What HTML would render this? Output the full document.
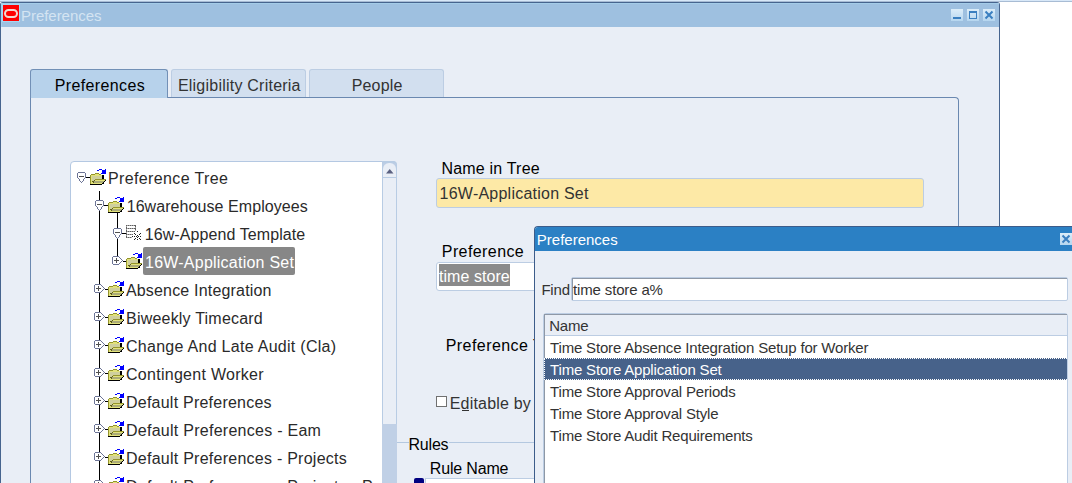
<!DOCTYPE html>
<html><head><meta charset="utf-8">
<style>
*{margin:0;padding:0;box-sizing:border-box}
html,body{width:1072px;height:483px;overflow:hidden;background:#fff;font-family:"Liberation Sans",sans-serif}
.a{position:absolute}
.t{position:absolute;white-space:pre;line-height:20px;font-size:16px;color:#000}
.wb{position:absolute;top:9px;width:12px;height:12px;background:linear-gradient(#dcedf9,#b6d6ef)}
.tr{position:absolute;white-space:pre;line-height:20px;font-size:16px;color:#222;letter-spacing:0.32px}
.pl{position:absolute;white-space:pre;line-height:20px;font-size:15px;color:#333;letter-spacing:-0.15px}
</style></head><body>
<div class="a" style="left:0;top:0;width:1072px;height:1px;background:#d8e8f8"></div>
<div class="a" style="left:0;top:1px;width:1072px;height:1px;background:#a8bcd4"></div>
<div class="a" style="left:0;top:2px;width:1000px;height:481px;background:#e9eef6;border-left:1px solid #46648e;border-right:1px solid #46648e;border-top:1px solid #46648e;border-top-left-radius:3px;border-top-right-radius:3px"></div>
<div class="a" style="left:1px;top:3px;width:998px;height:24px;background:#9ec0e0;border-top:1px solid #a4cce8"></div>
<div class="a" style="left:1px;top:3px;width:1px;height:24px;background:#a4d0ec"></div>
<div class="a" style="left:2px;top:4px;width:18px;height:18px;background:#a6d6f2"></div>
<div class="a" style="left:3px;top:5px;width:16px;height:16px;background:#ff0000"></div>
<div class="a" style="left:4px;top:8.5px;width:14px;height:9px;border:2px solid #f2d8d2;border-radius:4.5px"></div>
<div class="t" style="left:21px;top:5.80px;font-size:15px;color:#d4e4f2;letter-spacing:-0.04px;">Preferences</div>
<div class="wb" style="left:951px"><div class="a" style="left:2px;top:8px;width:8px;height:2px;background:#3a7fc0"></div></div>
<div class="wb" style="left:967px"><div class="a" style="left:2px;top:2px;width:8px;height:8px;border:1px solid #3a7fc0;border-top-width:2px"></div></div>
<div class="wb" style="left:983px"><svg class="a" style="left:0;top:0" width="12" height="12"><path d="M2.5 2.5L9.5 9.5M9.5 2.5L2.5 9.5" stroke="#3a7fc0" stroke-width="2"/></svg></div>
<div class="a" style="left:30px;top:97px;width:929px;height:386px;border-left:1px solid #6a88b0;border-top:1px solid #6a88b0;border-right:1px solid #6a88b0;border-top-right-radius:4px"></div>
<div class="a" style="left:30px;top:69px;width:138px;height:29px;background:#b7d2eb;border:1px solid #7290b6;border-bottom:none;border-radius:3px 3px 0 0"></div>
<div class="a" style="left:31px;top:97px;width:136px;height:1px;background:#b7d2eb"></div>
<div class="a" style="left:171px;top:69px;width:135px;height:28px;background:#d2dfef;border:1px solid #bccde3;border-bottom:none;border-radius:3px 3px 0 0"></div>
<div class="a" style="left:309px;top:69px;width:135px;height:28px;background:#d2dfef;border:1px solid #bccde3;border-bottom:none;border-radius:3px 3px 0 0"></div>
<div class="t" style="left:54.8px;top:76.46px;font-size:16px;color:#000;letter-spacing:0.36px;">Preferences</div>
<div class="t" style="left:177.9px;top:76.46px;font-size:16px;color:#333;letter-spacing:0.23px;">Eligibility Criteria</div>
<div class="t" style="left:351.7px;top:76.46px;font-size:16px;color:#333;letter-spacing:0.18px;">People</div>
<div class="a" style="left:70px;top:161px;width:327px;height:330px;background:#fff;border:1px solid #b4c8e2;border-radius:4px 4px 0 0"></div>
<div class="a" style="left:99px;top:191px;width:1px;height:300px;background:#000"></div>
<div class="a" style="left:117px;top:211px;width:1px;height:45px;background:#000"></div>
<div class="a" style="left:143px;top:247px;width:152px;height:28px;background:#878787;border-radius:2px"></div>
<svg class="a" style="left:77px;top:172px" width="9" height="11" shape-rendering="crispEdges"><path d="M1 0h7v1h-7zM0 1h1v1h-1zM8 1h1v1h-1zM0 2h1v1h-1zM8 2h1v1h-1zM0 3h1v1h-1zM8 3h1v1h-1zM0 4h1v1h-1zM8 4h1v1h-1zM0 5h1v1h-1zM8 5h1v1h-1zM1 6h1v1h-1zM7 6h1v1h-1zM2 7h1v1h-1zM6 7h1v1h-1zM2 8h1v1h-1zM6 8h1v1h-1zM3 9h1v1h-1zM5 9h1v1h-1zM4 10h1v1h-1z" fill="#6c7496"/><path d="M1 1h7v1h-7zM1 2h7v1h-7zM1 3h7v1h-7zM1 4h1v1h-1zM7 4h1v1h-1zM1 5h7v1h-7zM2 6h5v1h-5zM3 7h3v1h-3zM3 8h3v1h-3zM4 9h1v1h-1z" fill="#ffffff"/><path d="M2 4h5v1h-5z" fill="#505050"/></svg>
<div class="a" style="left:86px;top:177px;width:4px;height:1px;background:#000"></div>
<svg class="a" style="left:90px;top:169px" width="17" height="16" shape-rendering="crispEdges"><path d="M9 0h3v1h-3zM15 0h1v1h-1zM7 1h2v1h-2zM12 1h4v1h-4zM12 2h4v1h-4zM12 3h4v1h-4zM11 4h5v1h-5z" fill="#0000ff"/><path d="M5 4h4v1h-4zM1 5h4v1h-4zM9 5h2v1h-2zM0 6h1v1h-1zM0 7h1v1h-1zM0 8h1v1h-1zM0 9h1v1h-1zM0 10h1v1h-1zM5 10h11v1h-11zM0 11h1v1h-1zM0 12h1v1h-1zM0 13h1v1h-1zM0 14h1v1h-1z" fill="#94942c"/><path d="M5 5h4v1h-4zM1 6h11v1h-11zM1 7h1v1h-1zM1 8h1v1h-1zM1 9h1v1h-1zM1 10h1v1h-1zM1 11h1v1h-1zM5 11h10v1h-10zM1 12h1v1h-1zM1 13h2v1h-2zM1 14h11v1h-11z" fill="#e2e27a"/><path d="M12 6h2v1h-2zM12 7h2v1h-2zM12 8h2v1h-2zM12 9h2v1h-2zM15 11h1v1h-1zM14 12h1v1h-1zM13 13h1v1h-1zM12 14h2v1h-2zM0 15h12v1h-12z" fill="#000"/><path d="M2 7h10v1h-10zM2 8h10v1h-10zM2 9h10v1h-10zM2 10h3v1h-3zM2 11h2v1h-2z" fill="#cfcf9e"/><path d="M4 11h1v1h-1zM2 12h2v1h-2zM3 13h1v1h-1z" fill="#5c5c18"/><path d="M4 12h10v1h-10zM4 13h9v1h-9z" fill="#abab78"/></svg>
<div class="t" style="left:107.9px;top:169.46px;font-size:16px;color:#2a2a2a;letter-spacing:0.386px;">Preference Tree</div>
<svg class="a" style="left:95px;top:200px" width="9" height="11" shape-rendering="crispEdges"><path d="M1 0h7v1h-7zM0 1h1v1h-1zM8 1h1v1h-1zM0 2h1v1h-1zM8 2h1v1h-1zM0 3h1v1h-1zM8 3h1v1h-1zM0 4h1v1h-1zM8 4h1v1h-1zM0 5h1v1h-1zM8 5h1v1h-1zM1 6h1v1h-1zM7 6h1v1h-1zM2 7h1v1h-1zM6 7h1v1h-1zM2 8h1v1h-1zM6 8h1v1h-1zM3 9h1v1h-1zM5 9h1v1h-1zM4 10h1v1h-1z" fill="#6c7496"/><path d="M1 1h7v1h-7zM1 2h7v1h-7zM1 3h7v1h-7zM1 4h1v1h-1zM7 4h1v1h-1zM1 5h7v1h-7zM2 6h5v1h-5zM3 7h3v1h-3zM3 8h3v1h-3zM4 9h1v1h-1z" fill="#ffffff"/><path d="M2 4h5v1h-5z" fill="#505050"/></svg>
<div class="a" style="left:104px;top:205px;width:4px;height:1px;background:#000"></div>
<svg class="a" style="left:108px;top:197px" width="17" height="16" shape-rendering="crispEdges"><path d="M9 0h3v1h-3zM15 0h1v1h-1zM7 1h2v1h-2zM12 1h4v1h-4zM12 2h4v1h-4zM12 3h4v1h-4zM11 4h5v1h-5z" fill="#0000ff"/><path d="M5 4h4v1h-4zM1 5h4v1h-4zM9 5h2v1h-2zM0 6h1v1h-1zM0 7h1v1h-1zM0 8h1v1h-1zM0 9h1v1h-1zM0 10h1v1h-1zM5 10h11v1h-11zM0 11h1v1h-1zM0 12h1v1h-1zM0 13h1v1h-1zM0 14h1v1h-1z" fill="#94942c"/><path d="M5 5h4v1h-4zM1 6h11v1h-11zM1 7h1v1h-1zM1 8h1v1h-1zM1 9h1v1h-1zM1 10h1v1h-1zM1 11h1v1h-1zM5 11h10v1h-10zM1 12h1v1h-1zM1 13h2v1h-2zM1 14h11v1h-11z" fill="#e2e27a"/><path d="M12 6h2v1h-2zM12 7h2v1h-2zM12 8h2v1h-2zM12 9h2v1h-2zM15 11h1v1h-1zM14 12h1v1h-1zM13 13h1v1h-1zM12 14h2v1h-2zM0 15h12v1h-12z" fill="#000"/><path d="M2 7h10v1h-10zM2 8h10v1h-10zM2 9h10v1h-10zM2 10h3v1h-3zM2 11h2v1h-2z" fill="#cfcf9e"/><path d="M4 11h1v1h-1zM2 12h2v1h-2zM3 13h1v1h-1z" fill="#5c5c18"/><path d="M4 12h10v1h-10zM4 13h9v1h-9z" fill="#abab78"/></svg>
<div class="t" style="left:126.7px;top:197.46px;font-size:16px;color:#2a2a2a;letter-spacing:0.07px;">16warehouse Employees</div>
<svg class="a" style="left:113px;top:228px" width="9" height="11" shape-rendering="crispEdges"><path d="M1 0h7v1h-7zM0 1h1v1h-1zM8 1h1v1h-1zM0 2h1v1h-1zM8 2h1v1h-1zM0 3h1v1h-1zM8 3h1v1h-1zM0 4h1v1h-1zM8 4h1v1h-1zM0 5h1v1h-1zM8 5h1v1h-1zM1 6h1v1h-1zM7 6h1v1h-1zM2 7h1v1h-1zM6 7h1v1h-1zM2 8h1v1h-1zM6 8h1v1h-1zM3 9h1v1h-1zM5 9h1v1h-1zM4 10h1v1h-1z" fill="#6c7496"/><path d="M1 1h7v1h-7zM1 2h7v1h-7zM1 3h7v1h-7zM1 4h1v1h-1zM7 4h1v1h-1zM1 5h7v1h-7zM2 6h5v1h-5zM3 7h3v1h-3zM3 8h3v1h-3zM4 9h1v1h-1z" fill="#ffffff"/><path d="M2 4h5v1h-5z" fill="#505050"/></svg>
<div class="a" style="left:122px;top:233px;width:4px;height:1px;background:#000"></div>
<svg class="a" style="left:126px;top:225px" width="17" height="15" shape-rendering="crispEdges"><path d="M0 0h1v1h-1zM2 0h1v1h-1zM4 0h1v1h-1zM6 0h1v1h-1zM8 0h2v1h-2zM9 1h1v1h-1zM0 2h1v1h-1zM0 3h1v1h-1zM2 3h1v1h-1zM4 3h1v1h-1zM6 3h1v1h-1zM8 3h2v1h-2zM9 4h1v1h-1zM0 5h1v1h-1zM0 6h1v1h-1zM2 6h1v1h-1zM4 6h1v1h-1zM6 6h1v1h-1zM8 6h1v1h-1zM0 8h1v1h-1zM0 9h1v1h-1zM2 9h1v1h-1zM4 9h1v1h-1zM6 9h1v1h-1zM0 11h1v1h-1zM0 12h1v1h-1zM2 12h1v1h-1zM4 12h1v1h-1z" fill="#606060"/><path d="M1 0h1v1h-1zM3 0h1v1h-1zM5 0h1v1h-1zM7 0h1v1h-1zM0 1h1v1h-1zM9 2h1v1h-1zM1 3h1v1h-1zM3 3h1v1h-1zM5 3h1v1h-1zM7 3h1v1h-1zM0 4h1v1h-1zM9 5h1v1h-1zM1 6h1v1h-1zM3 6h1v1h-1zM5 6h1v1h-1zM7 6h1v1h-1zM0 7h1v1h-1zM1 9h1v1h-1zM3 9h1v1h-1zM5 9h1v1h-1zM0 10h1v1h-1zM1 12h1v1h-1zM3 12h1v1h-1zM5 12h1v1h-1z" fill="#a8a8a8"/><path d="M11 6h1v1h-1zM8 8h1v1h-1zM14 8h1v1h-1zM9 9h1v1h-1zM13 9h1v1h-1zM11 10h1v1h-1zM6 11h1v1h-1zM8 11h1v1h-1zM10 11h1v1h-1zM12 11h1v1h-1zM14 11h1v1h-1zM11 12h1v1h-1zM9 13h1v1h-1zM13 13h1v1h-1zM8 14h1v1h-1zM11 14h1v1h-1zM14 14h1v1h-1z" fill="#202020"/></svg>
<div class="t" style="left:144.7px;top:225.46px;font-size:16px;color:#2a2a2a;letter-spacing:0.089px;">16w-Append Template</div>
<svg class="a" style="left:112px;top:256px" width="11" height="9" shape-rendering="crispEdges"><path d="M1 0h6v1h-6zM0 1h1v1h-1zM7 1h1v1h-1zM0 2h1v1h-1zM8 2h1v1h-1zM0 3h1v1h-1zM9 3h1v1h-1zM0 4h1v1h-1zM10 4h1v1h-1zM0 5h1v1h-1zM9 5h1v1h-1zM0 6h1v1h-1zM8 6h1v1h-1zM0 7h1v1h-1zM7 7h1v1h-1zM1 8h6v1h-6z" fill="#6c7496"/><path d="M1 1h6v1h-6zM1 2h3v1h-3zM5 2h3v1h-3zM1 3h3v1h-3zM5 3h4v1h-4zM1 4h1v1h-1zM7 4h3v1h-3zM1 5h3v1h-3zM5 5h4v1h-4zM1 6h3v1h-3zM5 6h3v1h-3zM1 7h6v1h-6z" fill="#ffffff"/><path d="M4 2h1v1h-1zM4 3h1v1h-1zM2 4h5v1h-5zM4 5h1v1h-1zM4 6h1v1h-1z" fill="#505050"/></svg>
<div class="a" style="left:123px;top:261px;width:3px;height:1px;background:#000"></div>
<svg class="a" style="left:126px;top:253px" width="17" height="16" shape-rendering="crispEdges"><path d="M9 0h3v1h-3zM15 0h1v1h-1zM7 1h2v1h-2zM12 1h4v1h-4zM12 2h4v1h-4zM12 3h4v1h-4zM11 4h5v1h-5z" fill="#0000ff"/><path d="M5 4h4v1h-4zM1 5h4v1h-4zM9 5h2v1h-2zM0 6h1v1h-1zM0 7h1v1h-1zM0 8h1v1h-1zM0 9h1v1h-1zM0 10h1v1h-1zM5 10h11v1h-11zM0 11h1v1h-1zM0 12h1v1h-1zM0 13h1v1h-1zM0 14h1v1h-1z" fill="#94942c"/><path d="M5 5h4v1h-4zM1 6h11v1h-11zM1 7h1v1h-1zM1 8h1v1h-1zM1 9h1v1h-1zM1 10h1v1h-1zM1 11h1v1h-1zM5 11h10v1h-10zM1 12h1v1h-1zM1 13h2v1h-2zM1 14h11v1h-11z" fill="#e2e27a"/><path d="M12 6h2v1h-2zM12 7h2v1h-2zM12 8h2v1h-2zM12 9h2v1h-2zM15 11h1v1h-1zM14 12h1v1h-1zM13 13h1v1h-1zM12 14h2v1h-2zM0 15h12v1h-12z" fill="#000"/><path d="M2 7h10v1h-10zM2 8h10v1h-10zM2 9h10v1h-10zM2 10h3v1h-3zM2 11h2v1h-2z" fill="#cfcf9e"/><path d="M4 11h1v1h-1zM2 12h2v1h-2zM3 13h1v1h-1z" fill="#5c5c18"/><path d="M4 12h10v1h-10zM4 13h9v1h-9z" fill="#abab78"/></svg>
<div class="t" style="left:145.0px;top:253.46px;font-size:16px;color:#fff;letter-spacing:0.233px;">16W-Application Set</div>
<svg class="a" style="left:94px;top:284px" width="11" height="9" shape-rendering="crispEdges"><path d="M1 0h6v1h-6zM0 1h1v1h-1zM7 1h1v1h-1zM0 2h1v1h-1zM8 2h1v1h-1zM0 3h1v1h-1zM9 3h1v1h-1zM0 4h1v1h-1zM10 4h1v1h-1zM0 5h1v1h-1zM9 5h1v1h-1zM0 6h1v1h-1zM8 6h1v1h-1zM0 7h1v1h-1zM7 7h1v1h-1zM1 8h6v1h-6z" fill="#6c7496"/><path d="M1 1h6v1h-6zM1 2h3v1h-3zM5 2h3v1h-3zM1 3h3v1h-3zM5 3h4v1h-4zM1 4h1v1h-1zM7 4h3v1h-3zM1 5h3v1h-3zM5 5h4v1h-4zM1 6h3v1h-3zM5 6h3v1h-3zM1 7h6v1h-6z" fill="#ffffff"/><path d="M4 2h1v1h-1zM4 3h1v1h-1zM2 4h5v1h-5zM4 5h1v1h-1zM4 6h1v1h-1z" fill="#505050"/></svg>
<div class="a" style="left:105px;top:289px;width:3px;height:1px;background:#000"></div>
<svg class="a" style="left:108px;top:281px" width="17" height="16" shape-rendering="crispEdges"><path d="M9 0h3v1h-3zM15 0h1v1h-1zM7 1h2v1h-2zM12 1h4v1h-4zM12 2h4v1h-4zM12 3h4v1h-4zM11 4h5v1h-5z" fill="#0000ff"/><path d="M5 4h4v1h-4zM1 5h4v1h-4zM9 5h2v1h-2zM0 6h1v1h-1zM0 7h1v1h-1zM0 8h1v1h-1zM0 9h1v1h-1zM0 10h1v1h-1zM5 10h11v1h-11zM0 11h1v1h-1zM0 12h1v1h-1zM0 13h1v1h-1zM0 14h1v1h-1z" fill="#94942c"/><path d="M5 5h4v1h-4zM1 6h11v1h-11zM1 7h1v1h-1zM1 8h1v1h-1zM1 9h1v1h-1zM1 10h1v1h-1zM1 11h1v1h-1zM5 11h10v1h-10zM1 12h1v1h-1zM1 13h2v1h-2zM1 14h11v1h-11z" fill="#e2e27a"/><path d="M12 6h2v1h-2zM12 7h2v1h-2zM12 8h2v1h-2zM12 9h2v1h-2zM15 11h1v1h-1zM14 12h1v1h-1zM13 13h1v1h-1zM12 14h2v1h-2zM0 15h12v1h-12z" fill="#000"/><path d="M2 7h10v1h-10zM2 8h10v1h-10zM2 9h10v1h-10zM2 10h3v1h-3zM2 11h2v1h-2z" fill="#cfcf9e"/><path d="M4 11h1v1h-1zM2 12h2v1h-2zM3 13h1v1h-1z" fill="#5c5c18"/><path d="M4 12h10v1h-10zM4 13h9v1h-9z" fill="#abab78"/></svg>
<div class="t" style="left:125.9px;top:281.46px;font-size:16px;color:#2a2a2a;letter-spacing:0.183px;">Absence Integration</div>
<svg class="a" style="left:94px;top:312px" width="11" height="9" shape-rendering="crispEdges"><path d="M1 0h6v1h-6zM0 1h1v1h-1zM7 1h1v1h-1zM0 2h1v1h-1zM8 2h1v1h-1zM0 3h1v1h-1zM9 3h1v1h-1zM0 4h1v1h-1zM10 4h1v1h-1zM0 5h1v1h-1zM9 5h1v1h-1zM0 6h1v1h-1zM8 6h1v1h-1zM0 7h1v1h-1zM7 7h1v1h-1zM1 8h6v1h-6z" fill="#6c7496"/><path d="M1 1h6v1h-6zM1 2h3v1h-3zM5 2h3v1h-3zM1 3h3v1h-3zM5 3h4v1h-4zM1 4h1v1h-1zM7 4h3v1h-3zM1 5h3v1h-3zM5 5h4v1h-4zM1 6h3v1h-3zM5 6h3v1h-3zM1 7h6v1h-6z" fill="#ffffff"/><path d="M4 2h1v1h-1zM4 3h1v1h-1zM2 4h5v1h-5zM4 5h1v1h-1zM4 6h1v1h-1z" fill="#505050"/></svg>
<div class="a" style="left:105px;top:317px;width:3px;height:1px;background:#000"></div>
<svg class="a" style="left:108px;top:309px" width="17" height="16" shape-rendering="crispEdges"><path d="M9 0h3v1h-3zM15 0h1v1h-1zM7 1h2v1h-2zM12 1h4v1h-4zM12 2h4v1h-4zM12 3h4v1h-4zM11 4h5v1h-5z" fill="#0000ff"/><path d="M5 4h4v1h-4zM1 5h4v1h-4zM9 5h2v1h-2zM0 6h1v1h-1zM0 7h1v1h-1zM0 8h1v1h-1zM0 9h1v1h-1zM0 10h1v1h-1zM5 10h11v1h-11zM0 11h1v1h-1zM0 12h1v1h-1zM0 13h1v1h-1zM0 14h1v1h-1z" fill="#94942c"/><path d="M5 5h4v1h-4zM1 6h11v1h-11zM1 7h1v1h-1zM1 8h1v1h-1zM1 9h1v1h-1zM1 10h1v1h-1zM1 11h1v1h-1zM5 11h10v1h-10zM1 12h1v1h-1zM1 13h2v1h-2zM1 14h11v1h-11z" fill="#e2e27a"/><path d="M12 6h2v1h-2zM12 7h2v1h-2zM12 8h2v1h-2zM12 9h2v1h-2zM15 11h1v1h-1zM14 12h1v1h-1zM13 13h1v1h-1zM12 14h2v1h-2zM0 15h12v1h-12z" fill="#000"/><path d="M2 7h10v1h-10zM2 8h10v1h-10zM2 9h10v1h-10zM2 10h3v1h-3zM2 11h2v1h-2z" fill="#cfcf9e"/><path d="M4 11h1v1h-1zM2 12h2v1h-2zM3 13h1v1h-1z" fill="#5c5c18"/><path d="M4 12h10v1h-10zM4 13h9v1h-9z" fill="#abab78"/></svg>
<div class="t" style="left:126px;top:309.46px;font-size:16px;color:#2a2a2a;letter-spacing:0.212px;">Biweekly Timecard</div>
<svg class="a" style="left:94px;top:340px" width="11" height="9" shape-rendering="crispEdges"><path d="M1 0h6v1h-6zM0 1h1v1h-1zM7 1h1v1h-1zM0 2h1v1h-1zM8 2h1v1h-1zM0 3h1v1h-1zM9 3h1v1h-1zM0 4h1v1h-1zM10 4h1v1h-1zM0 5h1v1h-1zM9 5h1v1h-1zM0 6h1v1h-1zM8 6h1v1h-1zM0 7h1v1h-1zM7 7h1v1h-1zM1 8h6v1h-6z" fill="#6c7496"/><path d="M1 1h6v1h-6zM1 2h3v1h-3zM5 2h3v1h-3zM1 3h3v1h-3zM5 3h4v1h-4zM1 4h1v1h-1zM7 4h3v1h-3zM1 5h3v1h-3zM5 5h4v1h-4zM1 6h3v1h-3zM5 6h3v1h-3zM1 7h6v1h-6z" fill="#ffffff"/><path d="M4 2h1v1h-1zM4 3h1v1h-1zM2 4h5v1h-5zM4 5h1v1h-1zM4 6h1v1h-1z" fill="#505050"/></svg>
<div class="a" style="left:105px;top:345px;width:3px;height:1px;background:#000"></div>
<svg class="a" style="left:108px;top:337px" width="17" height="16" shape-rendering="crispEdges"><path d="M9 0h3v1h-3zM15 0h1v1h-1zM7 1h2v1h-2zM12 1h4v1h-4zM12 2h4v1h-4zM12 3h4v1h-4zM11 4h5v1h-5z" fill="#0000ff"/><path d="M5 4h4v1h-4zM1 5h4v1h-4zM9 5h2v1h-2zM0 6h1v1h-1zM0 7h1v1h-1zM0 8h1v1h-1zM0 9h1v1h-1zM0 10h1v1h-1zM5 10h11v1h-11zM0 11h1v1h-1zM0 12h1v1h-1zM0 13h1v1h-1zM0 14h1v1h-1z" fill="#94942c"/><path d="M5 5h4v1h-4zM1 6h11v1h-11zM1 7h1v1h-1zM1 8h1v1h-1zM1 9h1v1h-1zM1 10h1v1h-1zM1 11h1v1h-1zM5 11h10v1h-10zM1 12h1v1h-1zM1 13h2v1h-2zM1 14h11v1h-11z" fill="#e2e27a"/><path d="M12 6h2v1h-2zM12 7h2v1h-2zM12 8h2v1h-2zM12 9h2v1h-2zM15 11h1v1h-1zM14 12h1v1h-1zM13 13h1v1h-1zM12 14h2v1h-2zM0 15h12v1h-12z" fill="#000"/><path d="M2 7h10v1h-10zM2 8h10v1h-10zM2 9h10v1h-10zM2 10h3v1h-3zM2 11h2v1h-2z" fill="#cfcf9e"/><path d="M4 11h1v1h-1zM2 12h2v1h-2zM3 13h1v1h-1z" fill="#5c5c18"/><path d="M4 12h10v1h-10zM4 13h9v1h-9z" fill="#abab78"/></svg>
<div class="t" style="left:126px;top:337.46px;font-size:16px;color:#2a2a2a;letter-spacing:0.281px;">Change And Late Audit (Cla)</div>
<svg class="a" style="left:94px;top:368px" width="11" height="9" shape-rendering="crispEdges"><path d="M1 0h6v1h-6zM0 1h1v1h-1zM7 1h1v1h-1zM0 2h1v1h-1zM8 2h1v1h-1zM0 3h1v1h-1zM9 3h1v1h-1zM0 4h1v1h-1zM10 4h1v1h-1zM0 5h1v1h-1zM9 5h1v1h-1zM0 6h1v1h-1zM8 6h1v1h-1zM0 7h1v1h-1zM7 7h1v1h-1zM1 8h6v1h-6z" fill="#6c7496"/><path d="M1 1h6v1h-6zM1 2h3v1h-3zM5 2h3v1h-3zM1 3h3v1h-3zM5 3h4v1h-4zM1 4h1v1h-1zM7 4h3v1h-3zM1 5h3v1h-3zM5 5h4v1h-4zM1 6h3v1h-3zM5 6h3v1h-3zM1 7h6v1h-6z" fill="#ffffff"/><path d="M4 2h1v1h-1zM4 3h1v1h-1zM2 4h5v1h-5zM4 5h1v1h-1zM4 6h1v1h-1z" fill="#505050"/></svg>
<div class="a" style="left:105px;top:373px;width:3px;height:1px;background:#000"></div>
<svg class="a" style="left:108px;top:365px" width="17" height="16" shape-rendering="crispEdges"><path d="M9 0h3v1h-3zM15 0h1v1h-1zM7 1h2v1h-2zM12 1h4v1h-4zM12 2h4v1h-4zM12 3h4v1h-4zM11 4h5v1h-5z" fill="#0000ff"/><path d="M5 4h4v1h-4zM1 5h4v1h-4zM9 5h2v1h-2zM0 6h1v1h-1zM0 7h1v1h-1zM0 8h1v1h-1zM0 9h1v1h-1zM0 10h1v1h-1zM5 10h11v1h-11zM0 11h1v1h-1zM0 12h1v1h-1zM0 13h1v1h-1zM0 14h1v1h-1z" fill="#94942c"/><path d="M5 5h4v1h-4zM1 6h11v1h-11zM1 7h1v1h-1zM1 8h1v1h-1zM1 9h1v1h-1zM1 10h1v1h-1zM1 11h1v1h-1zM5 11h10v1h-10zM1 12h1v1h-1zM1 13h2v1h-2zM1 14h11v1h-11z" fill="#e2e27a"/><path d="M12 6h2v1h-2zM12 7h2v1h-2zM12 8h2v1h-2zM12 9h2v1h-2zM15 11h1v1h-1zM14 12h1v1h-1zM13 13h1v1h-1zM12 14h2v1h-2zM0 15h12v1h-12z" fill="#000"/><path d="M2 7h10v1h-10zM2 8h10v1h-10zM2 9h10v1h-10zM2 10h3v1h-3zM2 11h2v1h-2z" fill="#cfcf9e"/><path d="M4 11h1v1h-1zM2 12h2v1h-2zM3 13h1v1h-1z" fill="#5c5c18"/><path d="M4 12h10v1h-10zM4 13h9v1h-9z" fill="#abab78"/></svg>
<div class="t" style="left:126px;top:365.46px;font-size:16px;color:#2a2a2a;letter-spacing:0.281px;">Contingent Worker</div>
<svg class="a" style="left:94px;top:396px" width="11" height="9" shape-rendering="crispEdges"><path d="M1 0h6v1h-6zM0 1h1v1h-1zM7 1h1v1h-1zM0 2h1v1h-1zM8 2h1v1h-1zM0 3h1v1h-1zM9 3h1v1h-1zM0 4h1v1h-1zM10 4h1v1h-1zM0 5h1v1h-1zM9 5h1v1h-1zM0 6h1v1h-1zM8 6h1v1h-1zM0 7h1v1h-1zM7 7h1v1h-1zM1 8h6v1h-6z" fill="#6c7496"/><path d="M1 1h6v1h-6zM1 2h3v1h-3zM5 2h3v1h-3zM1 3h3v1h-3zM5 3h4v1h-4zM1 4h1v1h-1zM7 4h3v1h-3zM1 5h3v1h-3zM5 5h4v1h-4zM1 6h3v1h-3zM5 6h3v1h-3zM1 7h6v1h-6z" fill="#ffffff"/><path d="M4 2h1v1h-1zM4 3h1v1h-1zM2 4h5v1h-5zM4 5h1v1h-1zM4 6h1v1h-1z" fill="#505050"/></svg>
<div class="a" style="left:105px;top:401px;width:3px;height:1px;background:#000"></div>
<svg class="a" style="left:108px;top:393px" width="17" height="16" shape-rendering="crispEdges"><path d="M9 0h3v1h-3zM15 0h1v1h-1zM7 1h2v1h-2zM12 1h4v1h-4zM12 2h4v1h-4zM12 3h4v1h-4zM11 4h5v1h-5z" fill="#0000ff"/><path d="M5 4h4v1h-4zM1 5h4v1h-4zM9 5h2v1h-2zM0 6h1v1h-1zM0 7h1v1h-1zM0 8h1v1h-1zM0 9h1v1h-1zM0 10h1v1h-1zM5 10h11v1h-11zM0 11h1v1h-1zM0 12h1v1h-1zM0 13h1v1h-1zM0 14h1v1h-1z" fill="#94942c"/><path d="M5 5h4v1h-4zM1 6h11v1h-11zM1 7h1v1h-1zM1 8h1v1h-1zM1 9h1v1h-1zM1 10h1v1h-1zM1 11h1v1h-1zM5 11h10v1h-10zM1 12h1v1h-1zM1 13h2v1h-2zM1 14h11v1h-11z" fill="#e2e27a"/><path d="M12 6h2v1h-2zM12 7h2v1h-2zM12 8h2v1h-2zM12 9h2v1h-2zM15 11h1v1h-1zM14 12h1v1h-1zM13 13h1v1h-1zM12 14h2v1h-2zM0 15h12v1h-12z" fill="#000"/><path d="M2 7h10v1h-10zM2 8h10v1h-10zM2 9h10v1h-10zM2 10h3v1h-3zM2 11h2v1h-2z" fill="#cfcf9e"/><path d="M4 11h1v1h-1zM2 12h2v1h-2zM3 13h1v1h-1z" fill="#5c5c18"/><path d="M4 12h10v1h-10zM4 13h9v1h-9z" fill="#abab78"/></svg>
<div class="t" style="left:126px;top:393.46px;font-size:16px;color:#2a2a2a;letter-spacing:0.233px;">Default Preferences</div>
<svg class="a" style="left:94px;top:424px" width="11" height="9" shape-rendering="crispEdges"><path d="M1 0h6v1h-6zM0 1h1v1h-1zM7 1h1v1h-1zM0 2h1v1h-1zM8 2h1v1h-1zM0 3h1v1h-1zM9 3h1v1h-1zM0 4h1v1h-1zM10 4h1v1h-1zM0 5h1v1h-1zM9 5h1v1h-1zM0 6h1v1h-1zM8 6h1v1h-1zM0 7h1v1h-1zM7 7h1v1h-1zM1 8h6v1h-6z" fill="#6c7496"/><path d="M1 1h6v1h-6zM1 2h3v1h-3zM5 2h3v1h-3zM1 3h3v1h-3zM5 3h4v1h-4zM1 4h1v1h-1zM7 4h3v1h-3zM1 5h3v1h-3zM5 5h4v1h-4zM1 6h3v1h-3zM5 6h3v1h-3zM1 7h6v1h-6z" fill="#ffffff"/><path d="M4 2h1v1h-1zM4 3h1v1h-1zM2 4h5v1h-5zM4 5h1v1h-1zM4 6h1v1h-1z" fill="#505050"/></svg>
<div class="a" style="left:105px;top:429px;width:3px;height:1px;background:#000"></div>
<svg class="a" style="left:108px;top:421px" width="17" height="16" shape-rendering="crispEdges"><path d="M9 0h3v1h-3zM15 0h1v1h-1zM7 1h2v1h-2zM12 1h4v1h-4zM12 2h4v1h-4zM12 3h4v1h-4zM11 4h5v1h-5z" fill="#0000ff"/><path d="M5 4h4v1h-4zM1 5h4v1h-4zM9 5h2v1h-2zM0 6h1v1h-1zM0 7h1v1h-1zM0 8h1v1h-1zM0 9h1v1h-1zM0 10h1v1h-1zM5 10h11v1h-11zM0 11h1v1h-1zM0 12h1v1h-1zM0 13h1v1h-1zM0 14h1v1h-1z" fill="#94942c"/><path d="M5 5h4v1h-4zM1 6h11v1h-11zM1 7h1v1h-1zM1 8h1v1h-1zM1 9h1v1h-1zM1 10h1v1h-1zM1 11h1v1h-1zM5 11h10v1h-10zM1 12h1v1h-1zM1 13h2v1h-2zM1 14h11v1h-11z" fill="#e2e27a"/><path d="M12 6h2v1h-2zM12 7h2v1h-2zM12 8h2v1h-2zM12 9h2v1h-2zM15 11h1v1h-1zM14 12h1v1h-1zM13 13h1v1h-1zM12 14h2v1h-2zM0 15h12v1h-12z" fill="#000"/><path d="M2 7h10v1h-10zM2 8h10v1h-10zM2 9h10v1h-10zM2 10h3v1h-3zM2 11h2v1h-2z" fill="#cfcf9e"/><path d="M4 11h1v1h-1zM2 12h2v1h-2zM3 13h1v1h-1z" fill="#5c5c18"/><path d="M4 12h10v1h-10zM4 13h9v1h-9z" fill="#abab78"/></svg>
<div class="t" style="left:126px;top:421.46px;font-size:16px;color:#2a2a2a;letter-spacing:0.267px;">Default Preferences - Eam</div>
<svg class="a" style="left:94px;top:452px" width="11" height="9" shape-rendering="crispEdges"><path d="M1 0h6v1h-6zM0 1h1v1h-1zM7 1h1v1h-1zM0 2h1v1h-1zM8 2h1v1h-1zM0 3h1v1h-1zM9 3h1v1h-1zM0 4h1v1h-1zM10 4h1v1h-1zM0 5h1v1h-1zM9 5h1v1h-1zM0 6h1v1h-1zM8 6h1v1h-1zM0 7h1v1h-1zM7 7h1v1h-1zM1 8h6v1h-6z" fill="#6c7496"/><path d="M1 1h6v1h-6zM1 2h3v1h-3zM5 2h3v1h-3zM1 3h3v1h-3zM5 3h4v1h-4zM1 4h1v1h-1zM7 4h3v1h-3zM1 5h3v1h-3zM5 5h4v1h-4zM1 6h3v1h-3zM5 6h3v1h-3zM1 7h6v1h-6z" fill="#ffffff"/><path d="M4 2h1v1h-1zM4 3h1v1h-1zM2 4h5v1h-5zM4 5h1v1h-1zM4 6h1v1h-1z" fill="#505050"/></svg>
<div class="a" style="left:105px;top:457px;width:3px;height:1px;background:#000"></div>
<svg class="a" style="left:108px;top:449px" width="17" height="16" shape-rendering="crispEdges"><path d="M9 0h3v1h-3zM15 0h1v1h-1zM7 1h2v1h-2zM12 1h4v1h-4zM12 2h4v1h-4zM12 3h4v1h-4zM11 4h5v1h-5z" fill="#0000ff"/><path d="M5 4h4v1h-4zM1 5h4v1h-4zM9 5h2v1h-2zM0 6h1v1h-1zM0 7h1v1h-1zM0 8h1v1h-1zM0 9h1v1h-1zM0 10h1v1h-1zM5 10h11v1h-11zM0 11h1v1h-1zM0 12h1v1h-1zM0 13h1v1h-1zM0 14h1v1h-1z" fill="#94942c"/><path d="M5 5h4v1h-4zM1 6h11v1h-11zM1 7h1v1h-1zM1 8h1v1h-1zM1 9h1v1h-1zM1 10h1v1h-1zM1 11h1v1h-1zM5 11h10v1h-10zM1 12h1v1h-1zM1 13h2v1h-2zM1 14h11v1h-11z" fill="#e2e27a"/><path d="M12 6h2v1h-2zM12 7h2v1h-2zM12 8h2v1h-2zM12 9h2v1h-2zM15 11h1v1h-1zM14 12h1v1h-1zM13 13h1v1h-1zM12 14h2v1h-2zM0 15h12v1h-12z" fill="#000"/><path d="M2 7h10v1h-10zM2 8h10v1h-10zM2 9h10v1h-10zM2 10h3v1h-3zM2 11h2v1h-2z" fill="#cfcf9e"/><path d="M4 11h1v1h-1zM2 12h2v1h-2zM3 13h1v1h-1z" fill="#5c5c18"/><path d="M4 12h10v1h-10zM4 13h9v1h-9z" fill="#abab78"/></svg>
<div class="t" style="left:126px;top:449.46px;font-size:16px;color:#2a2a2a;letter-spacing:0.252px;">Default Preferences - Projects</div>
<svg class="a" style="left:94px;top:480px" width="11" height="9" shape-rendering="crispEdges"><path d="M1 0h6v1h-6zM0 1h1v1h-1zM7 1h1v1h-1zM0 2h1v1h-1zM8 2h1v1h-1zM0 3h1v1h-1zM9 3h1v1h-1zM0 4h1v1h-1zM10 4h1v1h-1zM0 5h1v1h-1zM9 5h1v1h-1zM0 6h1v1h-1zM8 6h1v1h-1zM0 7h1v1h-1zM7 7h1v1h-1zM1 8h6v1h-6z" fill="#6c7496"/><path d="M1 1h6v1h-6zM1 2h3v1h-3zM5 2h3v1h-3zM1 3h3v1h-3zM5 3h4v1h-4zM1 4h1v1h-1zM7 4h3v1h-3zM1 5h3v1h-3zM5 5h4v1h-4zM1 6h3v1h-3zM5 6h3v1h-3zM1 7h6v1h-6z" fill="#ffffff"/><path d="M4 2h1v1h-1zM4 3h1v1h-1zM2 4h5v1h-5zM4 5h1v1h-1zM4 6h1v1h-1z" fill="#505050"/></svg>
<div class="a" style="left:105px;top:485px;width:3px;height:1px;background:#000"></div>
<svg class="a" style="left:108px;top:477px" width="17" height="16" shape-rendering="crispEdges"><path d="M9 0h3v1h-3zM15 0h1v1h-1zM7 1h2v1h-2zM12 1h4v1h-4zM12 2h4v1h-4zM12 3h4v1h-4zM11 4h5v1h-5z" fill="#0000ff"/><path d="M5 4h4v1h-4zM1 5h4v1h-4zM9 5h2v1h-2zM0 6h1v1h-1zM0 7h1v1h-1zM0 8h1v1h-1zM0 9h1v1h-1zM0 10h1v1h-1zM5 10h11v1h-11zM0 11h1v1h-1zM0 12h1v1h-1zM0 13h1v1h-1zM0 14h1v1h-1z" fill="#94942c"/><path d="M5 5h4v1h-4zM1 6h11v1h-11zM1 7h1v1h-1zM1 8h1v1h-1zM1 9h1v1h-1zM1 10h1v1h-1zM1 11h1v1h-1zM5 11h10v1h-10zM1 12h1v1h-1zM1 13h2v1h-2zM1 14h11v1h-11z" fill="#e2e27a"/><path d="M12 6h2v1h-2zM12 7h2v1h-2zM12 8h2v1h-2zM12 9h2v1h-2zM15 11h1v1h-1zM14 12h1v1h-1zM13 13h1v1h-1zM12 14h2v1h-2zM0 15h12v1h-12z" fill="#000"/><path d="M2 7h10v1h-10zM2 8h10v1h-10zM2 9h10v1h-10zM2 10h3v1h-3zM2 11h2v1h-2z" fill="#cfcf9e"/><path d="M4 11h1v1h-1zM2 12h2v1h-2zM3 13h1v1h-1z" fill="#5c5c18"/><path d="M4 12h10v1h-10zM4 13h9v1h-9z" fill="#abab78"/></svg>
<div class="t" style="left:126px;top:477.46px;font-size:16px;color:#2a2a2a;letter-spacing:0.252px;">Default Preferences - Projects - Pr</div>
<div class="a" style="left:382px;top:161px;width:15px;height:330px;background:#e9eef6;border:1px solid #b8cce4;border-top-width:2px;border-radius:0 4px 0 0"></div>
<div class="a" style="left:383px;top:163px;width:13px;height:15px;background:#bccde4"></div>
<div class="a" style="left:383px;top:163px;width:13px;height:15px;background:#e9eef6;border-bottom:1px solid #b8cce4;border-radius:6px 6px 0 0"></div>
<svg class="a" style="left:386px;top:169px" width="8" height="5"><path d="M0 4.5L3.75 0L7.5 4.5Z" fill="#5a6080"/></svg>
<div class="a" style="left:382px;top:424px;width:15px;height:60px;background:#c0d0e6"></div>
<div class="t" style="left:441.4px;top:159.46px;font-size:16px;color:#000;letter-spacing:0.2px;">Name in Tree</div>
<div class="a" style="left:436px;top:178px;width:488px;height:30px;background:#fde9a6;border:1px solid #bccde3;border-radius:3px"></div>
<div class="t" style="left:439.6px;top:184.46px;font-size:16px;color:#333;letter-spacing:0.23px;">16W-Application Set</div>
<div class="t" style="left:441.8px;top:242.46px;font-size:16px;color:#000;letter-spacing:0.41px;">Preference</div>
<div class="a" style="left:436px;top:262px;width:120px;height:29px;background:#fff;border:1px solid #bccde3;border-radius:3px"></div>
<div class="a" style="left:439px;top:264px;width:71px;height:22px;background:#8a8a8a"></div>
<div class="t" style="left:439px;top:267.46px;font-size:16px;color:#fff;letter-spacing:0.056px;">time store</div>
<div class="t" style="left:445.7px;top:336.46px;font-size:16px;color:#000;letter-spacing:0.44px;">Preference Type</div>
<div class="a" style="left:436px;top:396px;width:11px;height:11px;background:#fff;border:1px solid #707070"></div>
<div class="t" style="left:449.7px;top:394.46px;font-size:16px;color:#333;letter-spacing:0.2px;">Editable by</div>
<div class="a" style="left:462px;top:410px;width:7px;height:1px;background:#333"></div>
<div class="a" style="left:397px;top:442px;width:12px;height:1px;background:#b4c8e0"></div>
<div class="a" style="left:449px;top:442px;width:90px;height:1px;background:#b4c8e0"></div>
<div class="t" style="left:408.5px;top:435.46px;font-size:16px;color:#000;letter-spacing:-0.2px;">Rules</div>
<div class="t" style="left:429.8px;top:459.46px;font-size:16px;color:#000;letter-spacing:-0.175px;">Rule Name</div>
<div class="a" style="left:414px;top:478px;width:10px;height:10px;background:#000080;border-radius:2px 2px 0 0"></div>
<div class="a" style="left:425px;top:478px;width:120px;height:10px;background:#fff;border:1px solid #bccde3"></div>
<div class="a" style="left:534px;top:226px;width:600px;height:300px;background:#e9eef6;border:1px solid #3c5c8a;border-right:none;border-bottom:none;border-top-left-radius:4px"></div>
<div class="a" style="left:535px;top:227px;width:540px;height:24px;background:#2b80c4;border-top-left-radius:3px"></div>
<div class="t" style="left:536.8px;top:229.80px;font-size:15px;color:#fff;letter-spacing:0px;">Preferences</div>
<div class="wb" style="left:1060px;top:233px"><svg class="a" style="left:0;top:0" width="12" height="12"><path d="M2.5 2.5L9.5 9.5M9.5 2.5L2.5 9.5" stroke="#3a7fc0" stroke-width="2"/></svg></div>
<div class="t" style="left:541.4px;top:279.80px;font-size:15px;color:#333;letter-spacing:-0.2px;">Find</div>
<div class="a" style="left:571px;top:277px;width:497px;height:24px;background:#fff;border:1px solid #bccde3;border-radius:2px"></div>
<div class="a" style="left:572px;top:278px;width:495px;height:22px;border-top:1px solid #8e98a6;border-left:1px solid #8e98a6"></div>
<div class="t" style="left:573.1px;top:279.80px;font-size:15px;color:#333;letter-spacing:-0.158px;">time store a%</div>
<div class="a" style="left:543px;top:313px;width:525px;height:200px;background:#fff;border:1px solid #bccde3;border-radius:3px 3px 0 0"></div>
<div class="a" style="left:544px;top:314px;width:523px;height:22px;background:#e9eef6;border-bottom:1px solid #bccde3"></div>
<div class="a" style="left:544px;top:314px;width:523px;height:200px;border-top:1px solid #8e98a6;border-left:1px solid #8e98a6"></div>
<div class="t" style="left:549.2px;top:315.80px;font-size:15px;color:#333;letter-spacing:-0.2px;">Name</div>
<div class="a" style="left:544px;top:358px;width:523px;height:22px;background:#47628a;border-top:1px dotted #fff;border-bottom:1px dotted #fff;border-left:1px dotted #fff"></div>
<div class="t" style="left:550.1px;top:337.80px;font-size:15px;color:#333;letter-spacing:-0.183px;">Time Store Absence Integration Setup for Worker</div>
<div class="t" style="left:550.1px;top:359.80px;font-size:15px;color:#fff;letter-spacing:-0.183px;">Time Store Application Set</div>
<div class="t" style="left:550.1px;top:381.80px;font-size:15px;color:#333;letter-spacing:-0.183px;">Time Store Approval Periods</div>
<div class="t" style="left:550.1px;top:403.80px;font-size:15px;color:#333;letter-spacing:-0.183px;">Time Store Approval Style</div>
<div class="t" style="left:550.1px;top:425.80px;font-size:15px;color:#333;letter-spacing:-0.183px;">Time Store Audit Requirements</div>
</body></html>
